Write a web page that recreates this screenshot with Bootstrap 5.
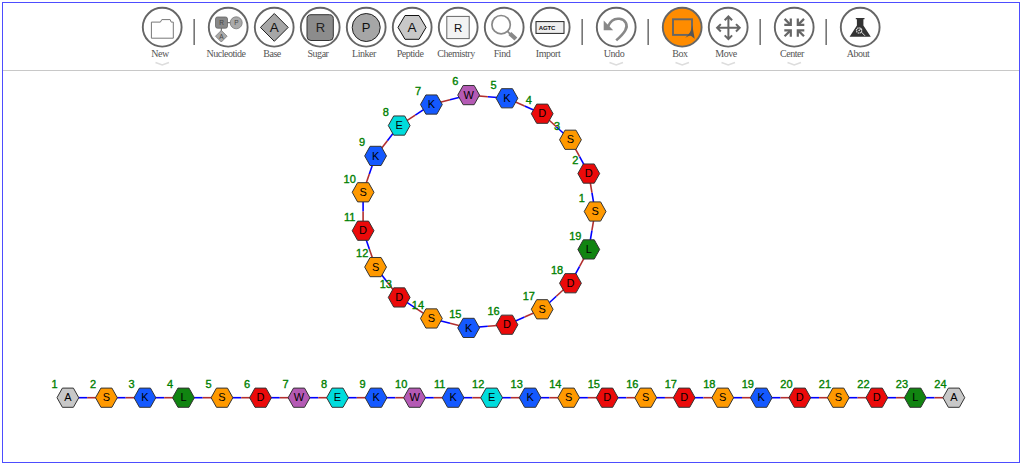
<!DOCTYPE html>
<html lang="en">
<head>
<meta charset="utf-8">
<title>Sequence editor</title>
<link href="https://cdn.jsdelivr.net/npm/bootstrap@5.3.0/dist/css/bootstrap.min.css" rel="stylesheet">
<style>
body{background:#fff;height:465px;overflow:hidden;padding:2px 3px 2px 2px}
.editor{height:461px;border:1px solid #4d4dff}
.toolbar{height:68px;border-bottom:1px solid #c8c8c8;padding-top:1px}
.tool{width:46px;background:none;border:0;padding:0}
.tool svg{display:block}
.tool-label{font:10px/12px "Liberation Serif",serif;letter-spacing:-.47px;color:#555;white-space:nowrap;margin:-2px 4px 0 0}
.divider{width:2px;height:26px;margin:15px 10px 0 8px;background:linear-gradient(90deg,#aaa 50%,#777 50%)}
.ring{fill:#fff;stroke:#666;stroke-width:1.9}
.ring.active{fill:#ff8c00}
.glyph,.res{font-family:"Liberation Sans",Arial,sans-serif;text-anchor:middle;fill:#111}
.res{font-size:11px;fill:#000}
.num{font:11px "Liberation Sans",Arial,sans-serif;text-anchor:middle;fill:#008000;stroke:#008000;stroke-width:.35}
</style>
</head>
<body>
<div class="editor d-flex flex-column">
  <nav class="toolbar d-flex justify-content-center align-items-start flex-shrink-0" id="toolbar"></nav>
  <main class="flex-grow-1"><svg id="canvas" class="d-block" width="1016" height="391" viewBox="3 71 1016 391"></svg></main>
</div>
<script src="https://cdn.jsdelivr.net/npm/bootstrap@5.3.0/dist/js/bootstrap.bundle.min.js"></script>
<script>
const centerArrow = '<path d="M-9.7-8.7-4.5-3.5" stroke="#666" stroke-width="2.2"/><path d="M-2.4-9.2V-1.6H-10V-3.8H-6L-4.6-5.2V-9.2z" fill="#666"/>';
const flip = (x, y) => `<g transform="translate(.3 .6) scale(${x} ${y})">${centerArrow}</g>`;
const moveArm = a => `<g transform="translate(.4 .8) rotate(${a})"><path d="M0 0V-11M-3.7-7.6 0-11.3 3.7-7.6" fill="none" stroke="#666" stroke-width="2"/></g>`;
const tools = [
  ['New', '<path d="M-10.6-4.9H-1.6L-.2-7.4H8.2L9.2-4.9H11.3V11.2H-10.6z" fill="#fff" stroke="#777"/>', 1],
  null,
  ['Nucleotide', '<path d="M-6.7-4.3H8M-6.7-4V9" stroke="#555"/><rect x="-12.5" y="-10" width="12" height="11.2" rx="2" fill="#888" stroke="#666" stroke-width=".8"/><circle cx="8.2" cy="-4.2" r="6" fill="#aaa" stroke="#777" stroke-width=".8"/><path d="M-6.7 3.4-.9 9.2-6.7 15-12.5 9.2z" fill="#aaa" stroke="#777" stroke-width=".8"/><g class="glyph" font-size="6.5" style="fill:#444"><text x="-6.5" y="-2">R</text><text x="8.3" y="-1.8">P</text><text x="-6.7" y="12">A</text></g>'],
  ['Base', '<path d="M.3-13.5 14.2.4.3 14.3-13.6.4z" fill="#a6a6a6" stroke="#222"/><text class="glyph" x=".2" y="5.4" font-size="13.5">A</text>'],
  ['Sugar', '<rect x="-13" y="-12.3" width="26.3" height="25.8" rx="4" fill="#8c8c8c" stroke="#333"/><text class="glyph" x=".4" y="5.2" font-size="13" style="fill:#222">R</text>'],
  ['Linker', '<circle cx=".2" cy=".5" r="14" fill="#a6a6a6" stroke="#222"/><text class="glyph" x=".1" y="5.3" font-size="13">P</text>'],
  ['Peptide', '<path d="M-14 .4-7-11.5H7L14.1.4 7 12.3H-7z" fill="#c8c8c8" stroke="#111"/><text class="glyph" x=".1" y="5.4" font-size="13.5">A</text>'],
  ['Chemistry', '<rect x="-11.2" y="-10.6" width="22.4" height="22.2" fill="#f3f3f3" stroke="#666"/><text class="glyph" x=".2" y="5" font-size="11.5">R</text>'],
  ['Find', '<circle cx="-2.9" cy="-2.3" r="9.2" fill="#fff" stroke="#888" stroke-width="1.7"/><path d="M3.5 4.3 6 6.8" stroke="#888" stroke-width="1.8"/><path d="M5.8 6.5 11.9 12" stroke="#888" stroke-width="4.3"/>'],
  ['Import', '<rect x="-14" y="-5.4" width="28" height="11.8" fill="#eee" stroke="#222"/><text class="glyph" x="-2.9" y="2.7" font-size="6" font-weight="bold" textLength="16.5">AGTC</text>'],
  null,
  ['Undo', '<path d="M-12.3-6.6V3.3H-2.8z" fill="#888"/><path d="M-8-.5C-5.5-6.5-1-8.8 3.5-8.2 9.5-7.4 12.5-1.8 9.3 3.3 7.3 6.8 4 10 .2 13.4" fill="none" stroke="#888" stroke-width="2.6"/>', 1],
  null,
  ['Box', '<rect x="-9" y="-7.7" width="19" height="15.6" fill="none" stroke="#666" stroke-width="1.9"/><path d="M10.3-1.5 12.7 11.8 8.2 8.3 3.2 10.8C7.2 7.5 9.3 4 10.3-1.5z" fill="#555"/>', 1],
  ['Move', [0, 90, 180, 270].map(moveArm).join(''), 1],
  null,
  ['Center', flip(1, 1) + flip(-1, 1) + flip(1, -1) + flip(-1, -1), 1],
  null,
  ['About', '<path d="M-4.2-9H4.5V-7.7H3.4V-1.5L10.8 9.8H-10.4L-3.1-1.5V-7.7H-4.2z" fill="#333"/><circle cx="-.9" cy="3.5" r="2.6" fill="none" stroke="#ddd" stroke-width="1.3" stroke-dasharray="1.4 .6"/><circle cx="-.9" cy="3.5" r=".8" fill="#ddd"/><path d="M1.3 5 5 8.8M1 1-.5 3.5" stroke="#ddd"/>']
];
document.getElementById('toolbar').innerHTML = tools.map(t => t
  ? `<button type="button" class="tool d-flex flex-column align-items-center"><svg width="46" height="46" viewBox="-23 -23 46 46"><circle class="ring${t[0] === 'Box' ? ' active' : ''}" cx=".2" cy=".2" r="19.4"/>${t[1]}</svg><span class="tool-label">${t[0]}</span>${t[2] ? '<svg width="16" height="6"><path d="M1.5 2.4 8.2 5 15 2.4" fill="none" stroke="#ddd" stroke-width="1.6"/></svg>' : ''}</button>`
  : '<span class="divider"></span>').join('');

const colors = {A:'#c8c8c8', S:'#ff9900', K:'#1459ff', L:'#118411', D:'#eb0a0a', W:'#b45ab4', E:'#00dcdc'};
function draw(seq, place, closed) {
  const p = [...seq].map((c, i) => place(i));
  let bonds = '', nodes = '';
  p.forEach(([x, y], i) => {
    if (i < p.length - 1 || closed) {
      const [u, v] = p[(i + 1) % p.length], mx = (x + u) / 2, my = (y + v) / 2;
      bonds += `<path d="M${x} ${y}L${mx} ${my}" stroke="#00f"/><path d="M${mx} ${my}L${u} ${v}" stroke="#b22f2f"/>`;
    }
    nodes += `<g transform="translate(${x} ${y})"><path d="M-10.9 0-5.5-9.6H5.5L10.9 0 5.5 9.6H-5.5z" fill="${colors[seq[i]]}" stroke="#333"/><text class="res" x="0" y="3.7">${seq[i]}</text><text class="num" x="-13.4" y="-9.7">${i + 1}</text></g>`;
  });
  return `<g stroke-width="1.6">${bonds}</g>${nodes}`;
}
document.getElementById('canvas').innerHTML =
  draw('SDSDKWKEKSDSDSKDSDL', i => {
    const a = i * 2 * Math.PI / 19;
    return [478.3 + 116.8 * Math.cos(a), 211.5 - 116.8 * Math.sin(a)];
  }, true) +
  draw('ASKLSDWEKWKEKSDSDSKDSDLA', i => [67.9 + i * 38.52, 397.7], false);
</script>
</body>
</html>
